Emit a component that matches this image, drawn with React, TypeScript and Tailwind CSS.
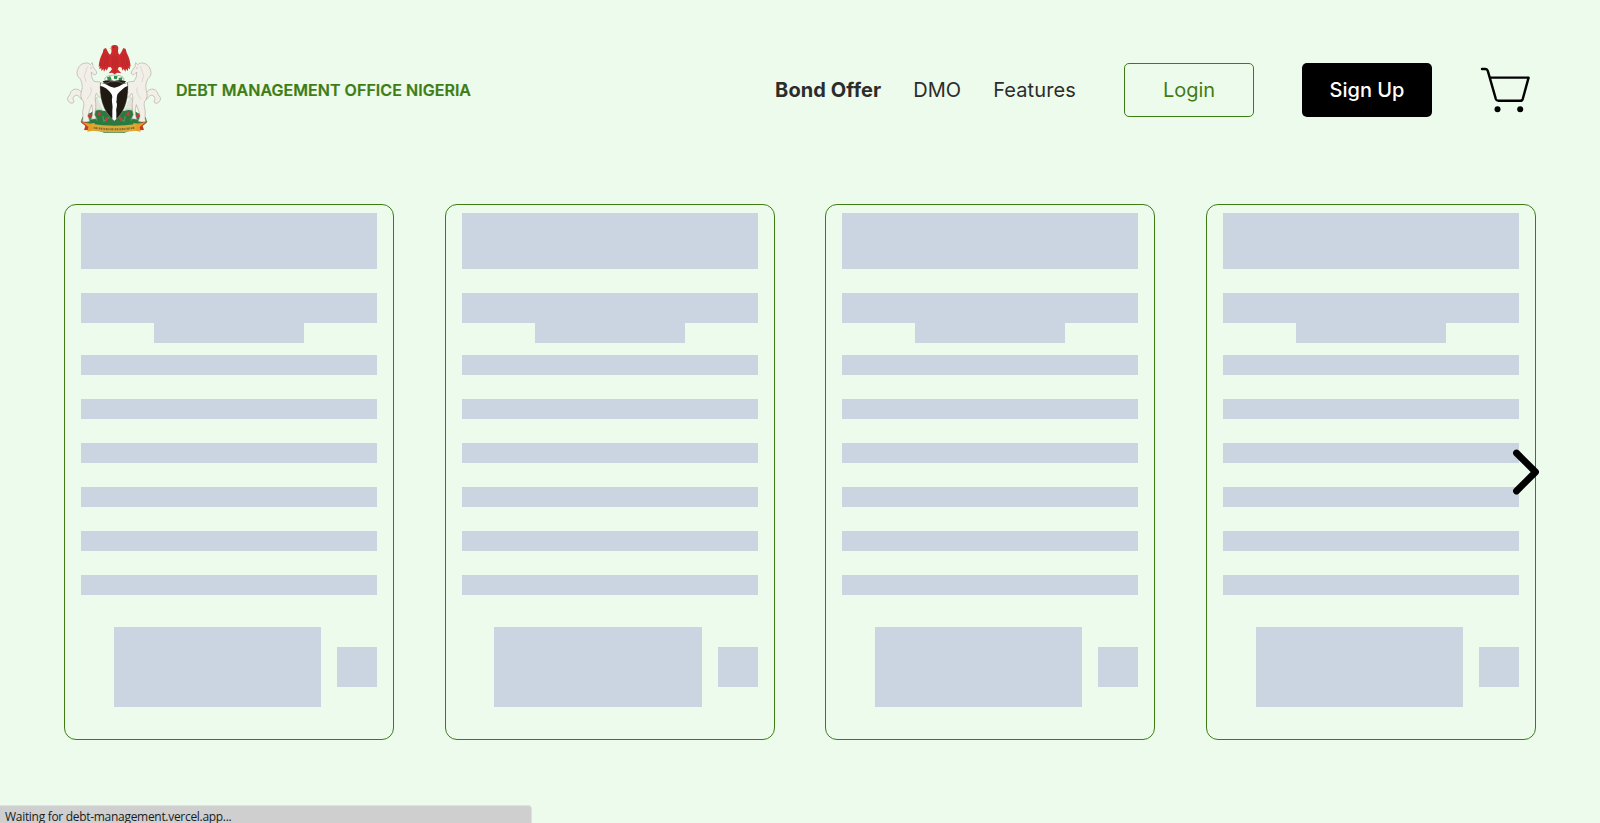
import React from "react";

const lines = [0, 1, 2, 3, 4, 5];
const cards = [0, 1, 2, 3];

function Horse() {
  return (
    <g stroke="#a39d8c" strokeWidth="1.6" strokeLinejoin="round" fill="#f1efe7">
      <path d="M80 176C74 160 60 156 50 162C42 167 44 176 36 183C32 188 36 198 44 201C50 203 54 200 54 195C50 190 50 186 55 180C60 174 70 180 76 190Z" />
      <path d="M84 82C74 84 67 92 64 104C61 112 64 122 72 128C79 140 80 152 77 164C73 176 74 188 82 196C86 206 82 214 80 226L81 246L79 257L92 258L101 256L96 240C98 226 104 216 107 206C110 216 110 226 109 238L106 250L121 248L116 236C119 222 121 206 118 192C117 184 118 178 121 172L130 184L140 182L132 170L136 152L140 146L132 138L114 136C106 126 106 116 106 108L114 116C120 118 124 112 121 106L111 92L109 80L103 86C98 80 90 80 84 82Z" />
      <path d="M97 90C88 98 92 108 86 116C84 124 90 130 90 138M104 154C110 168 100 180 92 190" fill="none" stroke="#c9c4b6" />
      <circle cx="105" cy="96" r="1.4" fill="#555" stroke="none" />
    </g>
  );
}

function CoatOfArms() {
  const flowers = [[101, 240], [130, 234], [152, 250], [195, 250], [216, 234], [246, 240]];
  return (
    <svg viewBox="24 18 300 288" className="h-24 w-[100px] shrink-0 overflow-visible" aria-hidden="true">
      {/* supports behind the shield */}
      <path d="M124 182L116 194V220H140M222 182L232 194V220H206" fill="#e4e5da" stroke="#c9cdc0" strokeWidth="3" />
      {/* grass */}
      <path d="M76 260C74 246 86 232 102 232C114 222 130 220 142 224H206C218 220 234 222 246 232C262 232 274 246 272 260C252 274 226 280 206 290H144C122 280 96 274 76 260Z" fill="#2a7a40" />
      <path d="M90 246L104 250L116 240L124 254M140 240L144 256L160 244M190 244L204 256L208 240M224 254L232 240L246 252L260 246" stroke="#45975a" strokeWidth="4" fill="none" />
      <Horse />
      <g transform="translate(348 0) scale(-1 1)">
        <Horse />
      </g>
      {/* eagle */}
      <path
        d="M177 27C169 26 164 31 165 37C168 46 167 52 162 56C157 52 154 44 150 36L143 39L140 50C133 62 129 76 128 92L131 90L130 100L136 96L136 105L142 99L144 107L149 98L152 104L157 94L164 93L168 100L158 112L168 110L176 115L184 110L196 112L185 100L189 93L196 94L200 104L203 98L208 107L210 99L216 105L216 96L222 100L221 90L224 92C223 76 219 62 212 50L209 39L202 36C198 44 195 52 190 56C186 52 185 46 187 37C187 31 184 27 177 27Z"
        fill="#cb2b2d"
      />
      <path d="M144 50L137 88M150 56L144 92M156 62L152 90M208 50L215 88M202 56L208 92M196 62L200 90M171 62L170 92M177 60V108M183 62L184 92" stroke="#a82022" strokeWidth="1.4" fill="none" />
      <path d="M168 33L160 37L167 40Z" fill="#d9a33b" />
      <circle cx="173" cy="34" r="1.4" fill="#4a1010" />
      {/* wreath */}
      <path d="M146 130C148 120 160 118 175 117C190 118 202 120 204 130L200 136H150Z" fill="#f1f5ec" stroke="#6d8a74" strokeWidth="1.5" />
      <path d="M153 124L163 121L167 132H155ZM174 119L185 121L182 130L174 128ZM188 126L199 124L198 134H188Z" fill="#299247" />
      <path d="M140 136Q158 130 175 135Q192 130 210 136L206 142H144Z" fill="#201b12" />
      {/* shield */}
      <path d="M132 140Q154 144 162 137H188Q196 144 216 140C218 180 212 226 175 254C138 226 130 180 132 140Z" fill="#201b12" stroke="#d9dacf" strokeWidth="1" />
      <path d="M134 141C148 141 160 153 175 155C190 153 202 141 214 141L215 150C206 152 196 164 188 170C180 178 184 188 181 198C186 208 179 218 181 228L181 249L175 254L169 249L169 222C172 208 165 196 169 184C169 174 162 168 156 162C150 156 142 152 133 150Z" fill="#fff" />
      {flowers.map(([x, y]) => (
        <g key={x} fill="#cf3a3f">
          <circle cx={x - 3} cy={y} r="3" />
          <circle cx={x + 3} cy={y} r="3" />
          <circle cx={x} cy={y - 4} r="3" />
          <circle cx={x} cy={y + 4} r="2.4" />
        </g>
      ))}
      {/* motto ribbon */}
      <path d="M73 256L98 261L106 283L84 282L88 270Z" fill="#c23b28" />
      <path d="M275 256L250 261L242 283L264 282L260 270Z" fill="#c23b28" />
      <path d="M78 257Q96 265 116 261L118 283L94 287L97 273ZM270 257Q252 265 232 261L230 283L254 287L251 273Z" fill="#e79c22" />
      <path d="M108 264Q174 275 242 264L240 284Q174 294 110 284Z" fill="#d9a93a" />
      <path d="M113 275Q174 285 237 275" fill="none" stroke="#86672a" strokeWidth="6" strokeDasharray="3 2 5 2 2 2" />
    </svg>
  );
}

function Cart() {
  return (
    <svg viewBox="0 0 56 56" className="size-14 shrink-0" fill="none" stroke="#000" strokeWidth="2.4" strokeLinecap="round" strokeLinejoin="round" aria-hidden="true">
      <path d="M2 7H5.4Q7.2 7 7.8 8.9L15.8 36.8Q16.5 38.8 18.4 38.8H40.2Q42.2 38.8 42.8 36.8L48.6 15.6H9.7" />
      <circle cx="17.5" cy="47.3" r="3" fill="#000" stroke="none" />
      <circle cx="40.2" cy="47.3" r="3" fill="#000" stroke="none" />
    </svg>
  );
}

function SkeletonCard() {
  return (
    <div className="flex h-[536px] w-[330px] flex-col rounded-xl border border-[#3f7d14] px-4 pt-2">
      <div className="h-14 bg-[#cbd5e1]" />
      <div className="mt-6 h-[30px] bg-[#cbd5e1]" />
      <div className="h-5 w-[150px] self-center bg-[#cbd5e1]" />
      <div className="mt-3 flex flex-col gap-6">
        {lines.map((n) => (
          <div key={n} className="h-5 bg-[#cbd5e1]" />
        ))}
      </div>
      <div className="mt-8 flex items-center justify-end gap-4">
        <div className="h-20 w-[70%] bg-[#cbd5e1]" />
        <div className="size-10 bg-[#cbd5e1]" />
      </div>
    </div>
  );
}

export default function App() {
  return (
    <div className="relative h-[823px] overflow-hidden bg-[#ecfbec] px-16 font-['Inter',sans-serif]">
      <header className="flex h-[180px] items-center justify-between">
        <div className="flex items-center gap-3">
          <CoatOfArms />
          <span className="text-base font-semibold tracking-[0.045px] text-[#3f7d14] [-webkit-text-stroke:0.2px_#3f7d14]">
            DEBT MANAGEMENT OFFICE NIGERIA
          </span>
        </div>
        <div className="flex items-center gap-12">
          <nav className="flex items-center gap-8 text-xl text-[#2c2c2c]">
            <a className="font-bold tracking-[0.08px]">Bond Offer</a>
            <a>DMO</a>
            <a className="tracking-[0.12px]">Features</a>
          </nav>
          <button className="h-[54px] w-[130px] rounded-[5px] border border-[#3f7d14] text-xl text-[#3f7d14]">Login</button>
          <button className="h-[54px] w-[130px] rounded-[5px] bg-black text-xl font-medium text-white">Sign Up</button>
          <Cart />
        </div>
      </header>

      <main className="flex justify-between pt-6">
        {cards.map((n) => (
          <SkeletonCard key={n} />
        ))}
      </main>

      <button className="absolute top-[447px] left-[1511px]" aria-label="Next">
        <svg viewBox="0 0 30 50" className="h-[50px] w-[30px]" fill="none" stroke="#000" strokeWidth="6.8" strokeLinecap="round" strokeLinejoin="round">
          <path d="M5.5 6L24.5 25L5.5 44" />
        </svg>
      </button>

      <div className="absolute bottom-0 left-0 h-[18px] w-[532px] overflow-hidden rounded-tr-[4px] border-t border-r border-[#dbe4db] bg-[#cfcfcf] pl-[5px] font-['Open_Sans',sans-serif] text-[12px] leading-[21px] tracking-[-0.3px] text-[#1b1b1b]">
        Waiting for debt-management.vercel.app...
      </div>
    </div>
  );
}
